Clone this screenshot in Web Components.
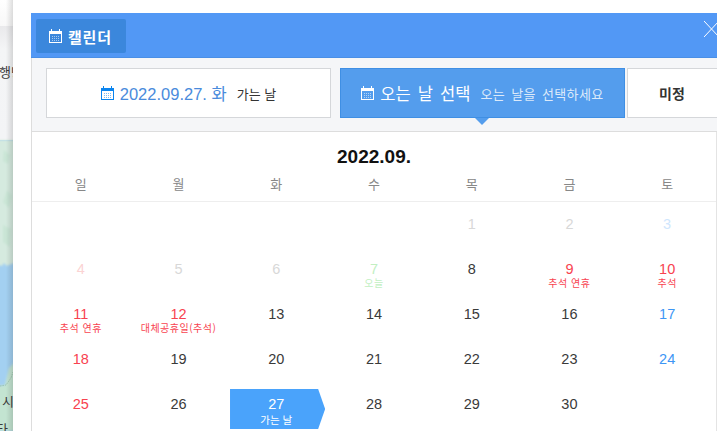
<!DOCTYPE html>
<html lang="ko">
<head>
<meta charset="utf-8">
<title>캘린더</title>
<style>
    html, body { margin: 0; height: 100%; overflow: hidden; background: #fff; }
    body { display: flex; font-family: "Liberation Sans", "Noto Sans CJK KR", sans-serif; }
</style>
</head>
<body>
<map-strip></map-strip>
<page-panel>
    <cal-modal>
        <date-tab slot="tabs" kind="going" main="2022.09.27. 화" sub="가는 날"></date-tab>
        <date-tab slot="tabs" kind="active" main="오는 날 선택" sub="오는 날을 선택하세요"></date-tab>
        <date-tab slot="tabs" kind="plain" main="미정"></date-tab>
        <cal-month title-text="2022.09."></cal-month>
    </cal-modal>
</page-panel>
<script>
class CalIcon extends HTMLElement {
    constructor() {
        super();
        this.attachShadow({ mode: 'open' });
    }

    connectedCallback() {
        this.shadowRoot.innerHTML = `
            <style>
                :host { display: inline-flex; width: 13px; height: 14px; flex: none; }
                svg { display: block; }
            </style>
            <svg width="13" height="14" viewBox="0 0 13 14" fill="currentColor" shape-rendering="crispEdges">
                <path fill-rule="evenodd" d="M0 2h2V0h1v2h7V0h1v2h2v12H0zM1 5v8h11V5z"/>
                <path opacity=".55" d="M3 7h1v1H3zM5 7h1v1H5zM7 7h1v1H7zM9 7h1v1H9zM3 9h1v1H3zM5 9h1v1H5zM7 9h1v1H7zM9 9h1v1H9zM3 11h1v1H3zM5 11h1v1H5zM7 11h1v1H7zM9 11h1v1H9z"/>
            </svg>
        `;
    }
}

class MapStrip extends HTMLElement {
    constructor() {
        super();
        this.attachShadow({ mode: 'open' });
    }

    connectedCallback() {
        this.shadowRoot.innerHTML = `
            <style>
                :host {
                    display: block;
                    position: relative;
                    flex: 0 0 13px;
                    height: 431px;
                    overflow: hidden;
                    font-family: "Noto Sans CJK KR", sans-serif;
                    color: #3a3a3a;
                }
                svg { position: absolute; left: 0; top: 0; }
                span { position: absolute; font-size: 13px; line-height: 15px; white-space: nowrap; }
                .shade {
                    position: absolute;
                    inset: 0;
                    background: linear-gradient(to right, rgba(0,0,0,0) 45%, rgba(0,0,0,.13) 100%);
                }
            </style>
            <svg width="13" height="431" viewBox="0 0 13 431">
                <defs>
                    <filter id="soft"><feGaussianBlur stdDeviation="1"/></filter>
                    <linearGradient id="top" x1="0" y1="0" x2="0" y2="1">
                        <stop offset="0" stop-color="#fff"/>
                        <stop offset="1" stop-color="#f8f8f8"/>
                    </linearGradient>
                    <linearGradient id="gray" x1="0" y1="0" x2="0" y2="1">
                        <stop offset="0" stop-color="#e9e9eb"/>
                        <stop offset=".2" stop-color="#f4f5f6"/>
                        <stop offset="1" stop-color="#f3f4f6"/>
                    </linearGradient>
                </defs>
                <rect width="13" height="26" fill="url(#top)"/>
                <rect y="26" width="13" height="114" fill="url(#gray)"/>
                <rect y="140" width="13" height="291" fill="#a3d0f1"/>
                <path filter="url(#soft)" fill="#d5eadf" d="M-2 140H15V263L11 264 7 266 4 263 2 266-2 265z"/>
                <path filter="url(#soft)" fill="#c9e5d5" d="M4 150l6 5-2 9-5-3zM7 190l5 6-3 12-6-6zM3 225l8 4-1 18-7-5z"/>
                <path filter="url(#soft)" fill="#c3e4d1" d="M-2 386L5 385 9 368 15 362V431H-2z"/>
                <path fill="none" stroke="#8fb8a0" stroke-width=".7" stroke-dasharray="1.5 1" d="M0 386L6 385 11 378 13 372"/>
            </svg>
            <div class="shade"></div>
            <span style="left:-1px;top:64px">행당</span>
            <span style="left:2px;top:393px">시</span>
            <span style="left:-4px;top:421px">타</span>
        `;
    }
}

class PagePanel extends HTMLElement {
    constructor() {
        super();
        this.attachShadow({ mode: 'open' });
    }

    connectedCallback() {
        this.shadowRoot.innerHTML = `
            <style>
                :host {
                    display: block;
                    flex: 1;
                    min-width: 0;
                    padding: 13px 0 0 18px;
                    background: #fff;
                }
            </style>
            <slot></slot>
        `;
    }
}

class CalModal extends HTMLElement {
    constructor() {
        super();
        this.attachShadow({ mode: 'open' });
    }

    connectedCallback() {
        this.shadowRoot.innerHTML = `
            <style>
                :host { display: block; width: 686px; overflow: hidden; }
                .head {
                    display: flex;
                    justify-content: space-between;
                    align-items: flex-start;
                    height: 45px;
                    padding: 6px 0 0 5px;
                    box-sizing: border-box;
                    background: #5298f5;
                    border-bottom: 1px solid #4a8fe6;
                }
                .head-btn {
                    display: flex;
                    align-items: center;
                    gap: 6px;
                    width: 90px;
                    height: 34px;
                    box-sizing: border-box;
                    padding-left: 13px;
                    background: #3b87dc;
                    border-radius: 2px;
                    color: #fff;
                    font: bold 15px "Noto Sans CJK KR", sans-serif;
                    letter-spacing: .8px;
                }
                .close { display: block; margin: 2px -1px 0 0; }
                .tabs {
                    display: flex;
                    height: 74px;
                    box-sizing: border-box;
                    padding: 10px 0 0 14px;
                    background: #f5f6f8;
                    border-left: 1px solid #ddd;
                    border-bottom: 1px solid #ddd;
                }
            </style>
            <div class="head">
                <div class="head-btn"><cal-icon></cal-icon><span>캘린더</span></div>
                <svg class="close" width="14" height="16" viewBox="0 0 14 16" fill="none" stroke="#fff" stroke-width="1">
                    <path d="M0 0L15 16M0 16L15 0"/>
                </svg>
            </div>
            <div class="tabs"><slot name="tabs"></slot></div>
            <slot></slot>
        `;
    }
}

class DateTab extends HTMLElement {
    constructor() {
        super();
        this.attachShadow({ mode: 'open' });
    }

    connectedCallback() {
        const kind = this.getAttribute('kind');
        const main = this.getAttribute('main');
        const sub = this.getAttribute('sub');
        this.shadowRoot.innerHTML = `
            <style>
                :host {
                    display: flex;
                    position: relative;
                    align-items: center;
                    justify-content: center;
                    gap: 10px;
                    flex: none;
                    width: 285px;
                    height: 50px;
                    box-sizing: border-box;
                    background: #fff;
                    border: 1px solid #d5d7da;
                    white-space: nowrap;
                    font-family: "Liberation Sans", "Noto Sans CJK KR", sans-serif;
                }
                .main { display: flex; align-items: center; gap: 6px; font-size: 16.5px; }
                .sub { font: 13px "Noto Sans CJK KR", sans-serif; }
                :host([kind="going"]) { margin-right: 9px; color: #4a8bdc; }
                :host([kind="going"]) cal-icon { color: #0a84ee; }
                :host([kind="going"]) .sub { color: #333; }
                :host([kind="active"]) {
                    margin-right: 2px;
                    background: #549ded;
                    border-color: #3f8fe4;
                    color: #fff;
                }
                :host([kind="active"]) .main { word-spacing: 2.5px; }
                :host([kind="active"]) .sub {
                    color: #dceafa;
                    letter-spacing: .4px;
                    word-spacing: 2px;
                }
                :host([kind="active"])::after {
                    content: "";
                    position: absolute;
                    left: 134px;
                    top: 49px;
                    border-style: solid;
                    border-width: 7px 7px 0;
                    border-color: #549ded transparent transparent;
                }
                :host([kind="plain"]) { width: 95px; padding-right: 5px; color: #333; }
                :host([kind="plain"]) .main { font: bold 14px "Noto Sans CJK KR", sans-serif; }
            </style>
            <div class="main">
                ${kind === 'plain' ? '' : '<cal-icon></cal-icon>'}
                <span>${main}</span>
            </div>
            ${sub ? `<div class="sub">${sub}</div>` : ''}
        `;
    }
}

class CalDay extends HTMLElement {
    constructor() {
        super();
        this.attachShadow({ mode: 'open' });
    }

    connectedCallback() {
        const num = this.getAttribute('num') || '';
        const label = this.getAttribute('label');
        this.shadowRoot.innerHTML = `
            <style>
                :host {
                    display: flex;
                    flex-direction: column;
                    align-items: center;
                    height: 40px;
                    padding-top: 7px;
                    box-sizing: border-box;
                    color: var(--day-color, #3a3a3a);
                }
                .num { font: 14.5px/16px "Liberation Sans", sans-serif; }
                .label {
                    font: 10px/11px "Noto Sans CJK KR", sans-serif;
                    letter-spacing: .5px;
                    white-space: nowrap;
                }
                :host([selected]) {
                    background: #4aa3fb;
                    color: #fff;
                    clip-path: polygon(2.6px 0, calc(100% - 7px) 0, 100% 50%, calc(100% - 7px) 100%, 2.6px 100%);
                }
                :host([selected]) .label {
                    margin-top: 1px;
                    font-size: 10.5px;
                    line-height: 13px;
                    letter-spacing: 0;
                }
            </style>
            <div class="num">${num}</div>
            ${label ? `<div class="label">${label}</div>` : ''}
        `;
    }
}

class CalMonth extends HTMLElement {
    constructor() {
        super();
        this.attachShadow({ mode: 'open' });
    }

    connectedCallback() {
        const weekdays = ['일', '월', '화', '수', '목', '금', '토'];
        const red = '#f8424f';
        const blue = '#3d96f5';
        const past = '#d8d8d8';
        const days = [
            {}, {}, {}, {},
            { n: 1, c: past }, { n: 2, c: past }, { n: 3, c: '#cfe6fd' },
            { n: 4, c: '#fbd3d3' }, { n: 5, c: past }, { n: 6, c: past },
            { n: 7, c: '#c2efc2', l: '오늘' }, { n: 8 },
            { n: 9, c: red, l: '추석 연휴' }, { n: 10, c: red, l: '추석' },
            { n: 11, c: red, l: '추석 연휴' }, { n: 12, c: red, l: '대체공휴일(추석)' },
            { n: 13 }, { n: 14 }, { n: 15 }, { n: 16 }, { n: 17, c: blue },
            { n: 18, c: red }, { n: 19 }, { n: 20 }, { n: 21 }, { n: 22 }, { n: 23 }, { n: 24, c: blue },
            { n: 25, c: red }, { n: 26 }, { n: 27, l: '가는 날', sel: true }, { n: 28 }, { n: 29 }, { n: 30 }
        ];
        const cells = days.map(d => `
            <cal-day num="${d.n || ''}"
                ${d.l ? `label="${d.l}"` : ''}
                ${d.sel ? 'selected' : ''}
                ${d.c ? `style="--day-color:${d.c}"` : ''}></cal-day>`).join('');

        this.shadowRoot.innerHTML = `
            <style>
                :host {
                    display: block;
                    box-sizing: border-box;
                    height: 300px;
                    background: #fff;
                    border-left: 1px solid #ddd;
                    border-right: 1px solid #e4e4e4;
                }
                .title {
                    padding-top: 14px;
                    text-align: center;
                    color: #111;
                    font: bold 19px/22px "Liberation Sans", sans-serif;
                }
                .week {
                    display: grid;
                    grid-template-columns: repeat(7, 1fr);
                    height: 34px;
                    padding-top: 5px;
                    box-sizing: border-box;
                    border-bottom: 1px solid #eee;
                    text-align: center;
                    color: #888;
                    font: 13px/22px "Noto Sans CJK KR", sans-serif;
                }
                .grid {
                    display: grid;
                    grid-template-columns: repeat(7, 1fr);
                    row-gap: 5px;
                    padding-top: 7px;
                }
            </style>
            <div class="title">${this.getAttribute('title-text')}</div>
            <div class="week">${weekdays.map(w => `<div>${w}</div>`).join('')}</div>
            <div class="grid">${cells}</div>
        `;
    }
}

customElements.define('cal-icon', CalIcon);
customElements.define('map-strip', MapStrip);
customElements.define('page-panel', PagePanel);
customElements.define('cal-modal', CalModal);
customElements.define('date-tab', DateTab);
customElements.define('cal-day', CalDay);
customElements.define('cal-month', CalMonth);
</script>
</body>
</html>
